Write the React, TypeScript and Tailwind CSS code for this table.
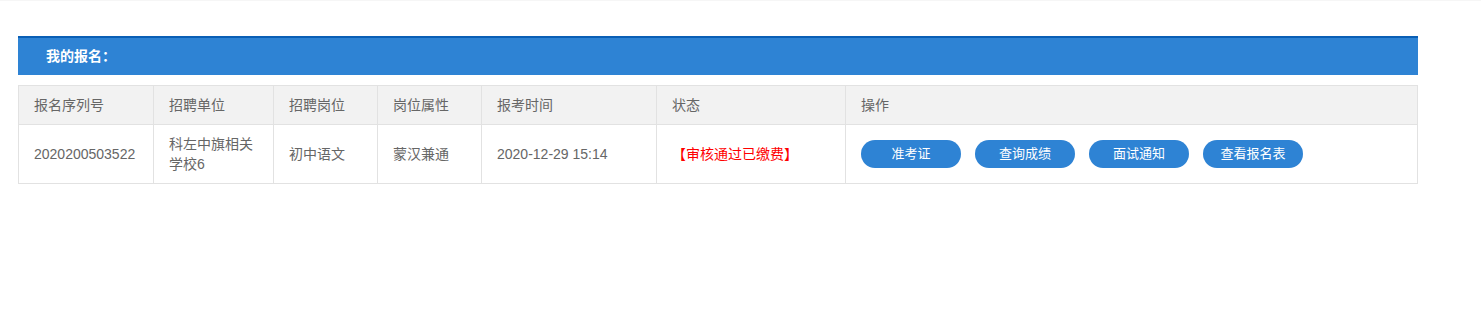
const columns = [
  { title: "报名序列号", width: "w-[135px]" },
  { title: "招聘单位", width: "w-[120px]" },
  { title: "招聘岗位", width: "w-[104px]" },
  { title: "岗位属性", width: "w-[104px]" },
  { title: "报考时间", width: "w-[175px]" },
  { title: "状态", width: "w-[189px]" },
  { title: "操作", width: "" },
];

const actions = ["准考证", "查询成绩", "面试通知", "查看报名表"];

export default function App() {
  return (
    <div
      className="min-h-[323px] bg-white border-t border-[#f6f6f6]"
      style={{ fontFamily: '"Liberation Sans", "Noto Sans CJK SC", sans-serif' }}
    >
      <div className="ml-[18px] w-[1400px] pt-[35px]">
        <div className="h-[39px] border-t-2 border-[#0a5fb5] bg-[#2e83d4] pl-[28px] flex items-center text-[14px] font-bold text-white">
          我的报名：
        </div>

        <table className="mt-[10px] w-full border-collapse table-fixed text-[14px] text-[#666]">
          <thead className="bg-[#f2f2f2]">
            <tr>
              {columns.map((col) => (
                <th
                  key={col.title}
                  className={`${col.width} h-[39px] border border-[#e2e2e2] px-[15px] text-left font-normal`}
                >
                  {col.title}
                </th>
              ))}
            </tr>
          </thead>
          <tbody>
            <tr>
              <td className="h-[59px] border border-[#e2e2e2] px-[15px]">2020200503522</td>
              <td className="border border-[#e2e2e2] px-[15px] leading-[20px]">科左中旗相关学校6</td>
              <td className="border border-[#e2e2e2] px-[15px]">初中语文</td>
              <td className="border border-[#e2e2e2] px-[15px]">蒙汉兼通</td>
              <td className="border border-[#e2e2e2] px-[15px]">2020-12-29 15:14</td>
              <td className="border border-[#e2e2e2] px-[15px] text-[#ff0000]">【审核通过已缴费】</td>
              <td className="border border-[#e2e2e2] px-[15px]">
                <div className="flex gap-[14px]">
                  {actions.map((a) => (
                    <button
                      key={a}
                      className="h-[28px] w-[100px] rounded-full bg-[#2e83d4] text-[13px] text-white"
                    >
                      {a}
                    </button>
                  ))}
                </div>
              </td>
            </tr>
          </tbody>
        </table>
      </div>
    </div>
  );
}
